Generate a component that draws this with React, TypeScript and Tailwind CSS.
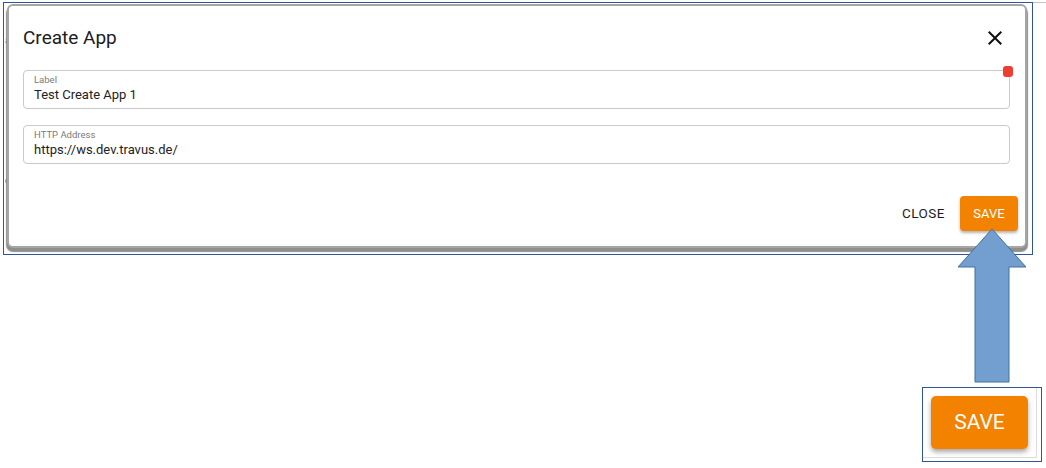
import React from "react";

const ORANGE = "bg-[#f38200]";

const Field = ({ label, value, top }: { label: string; value: string; top: string }) => (
  <div className={`${top} ml-[14px] mr-[15px] h-[39px] rounded-[4px] border border-[#cacaca] pl-[10px] pt-[3px]`}>
    <div className="text-[9.5px] leading-[12px] text-[#7a7a7a]">{label}</div>
    <div className="text-[13px] leading-[17px] text-[#222]">{value}</div>
  </div>
);

const App = () => {
  return (
    <div className="relative h-[468px] w-[1046px] overflow-hidden bg-white font-['Roboto',sans-serif]">
      {/* stray line from the page behind */}
      <div className="absolute left-[1033px] top-[2px] h-px w-[13px] bg-[#c4c4c4]" />

      {/* framed dialog screenshot */}
      <div className="relative ml-[3px] mt-[2px] h-[253px] w-[1030px] border border-[#2f5597]">
        <span className="absolute left-[1px] top-[30px] text-[11px] text-[#555]">a</span>
        <span className="absolute left-[1px] top-[170px] text-[11px] text-[#555]">e</span>

        <div className="relative ml-[5px] mt-[3px] flex h-[240px] w-[1016px] flex-col rounded-[4px] bg-white shadow-[0_0_0_2px_#a6a6a6,0_3px_1px_3px_#8e8e8e]">
          <div className="ml-[14px] mr-[18px] mt-[20px] flex h-[24px] items-center justify-between">
            <h2 className="text-[19px] leading-[24px] text-[#1c1c1c]">Create App</h2>
            <button className="flex h-6 w-6 items-center justify-center text-[#111]">
              <svg viewBox="0 0 24 24" className="h-6 w-6" fill="currentColor">
                <path d="M19 6.41L17.59 5 12 10.59 6.41 5 5 6.41 10.59 12 5 17.59 6.41 19 12 13.41 17.59 19 19 17.59 13.41 12z" />
              </svg>
            </button>
          </div>

          <Field top="mt-[20px]" label="Label" value="Test Create App 1" />
          <Field top="mt-[16px]" label="HTTP Address" value="https://ws.dev.travus.de/" />

          <div className="mb-[15px] mr-[7px] mt-auto flex items-center justify-end gap-[7px]">
            <button className="h-[35px] px-[8px] text-[13.5px] tracking-[0.5px] text-[#1c1c1c]">CLOSE</button>
            <button
              className={`h-[35px] w-[58px] rounded-[4px] ${ORANGE} text-[13px] text-white shadow-[0_2px_3px_rgba(0,0,0,0.3)]`}
            >
              SAVE
            </button>
          </div>
        </div>
      </div>

      {/* red marker on the dialog */}
      <div className="absolute left-[1003px] top-[66px] h-[11px] w-[10px] rounded-[3px] bg-[#ee3d32]" />

      {/* annotation arrow */}
      <svg
        className="absolute left-[956px] top-[227px]"
        width="73"
        height="158"
        viewBox="956 227 73 158"
      >
        <polygon
          points="992,229 1026,267 1009,267 1009,382 975,382 975,267 958,267"
          fill="#729fcf"
          stroke="#41719c"
          strokeWidth="1"
        />
      </svg>

      {/* zoomed button callout */}
      <div className="mr-[4px] mt-[132px] flex justify-end">
        <div className="h-[75px] w-[120px] border border-[#2f5597]">
          <div className="h-[70px] w-[114px] border-b border-r border-[#dcdcdc] pl-[8px] pt-[8px]">
            <button
              className={`flex h-[53px] w-[97px] items-center justify-center rounded-[5px] ${ORANGE} text-[21px] text-white shadow-[0_3px_5px_rgba(0,0,0,0.35)]`}
            >
              SAVE
            </button>
          </div>
        </div>
      </div>
    </div>
  );
};

export default App;
